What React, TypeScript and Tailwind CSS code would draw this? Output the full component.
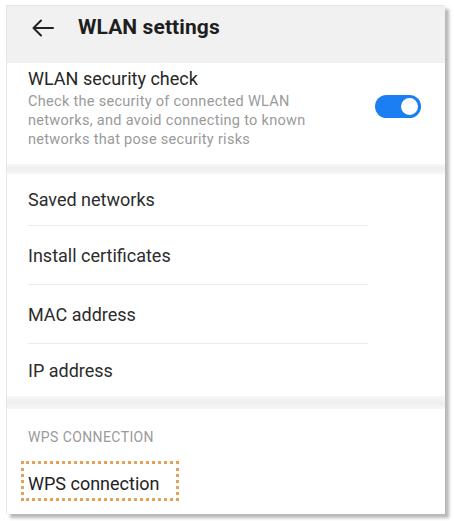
import React from 'react';

const rows = [
  { label: 'Saved networks', h: 'h-[51px]' },
  { label: 'Install certificates', h: 'h-[58px]' },
  { label: 'MAC address', h: 'h-[58px]' },
  { label: 'IP address', h: 'h-[52px]' },
];

function BackArrow() {
  return (
    <svg width="22" height="18" viewBox="0 0 22 18" fill="none" stroke="#222" strokeWidth="2" strokeLinecap="round" strokeLinejoin="round">
      <path d="M21 9H2" />
      <path d="M9 1.5L1.5 9L9 16.5" />
    </svg>
  );
}

function Toggle() {
  return (
    <div className="w-[46px] h-[23px] rounded-full bg-[#1b7ef2] flex items-center justify-end pr-px">
      <div className="w-[21px] h-[21px] rounded-full bg-white border-2 border-[#1b7ef2]" />
    </div>
  );
}

export default function App() {
  return (
    <div className="w-[454px] h-[521px] bg-white pt-[5px] pl-[6px]" style={{ fontFamily: 'Roboto, "Liberation Sans", sans-serif' }}>
      <div className="w-[439px] h-[509px] bg-white border-l border-t border-[#e6e6e6] shadow-[4px_4px_3px_rgba(0,0,0,0.28)] flex flex-col overflow-hidden">
        {/* header */}
        <div className="h-[57px] bg-[#f1f1f1] pl-[25px] shrink-0">
          <div className="h-[44px] flex items-center">
            <BackArrow />
            <span className="ml-[24px] text-[21px] font-bold text-[#1e1e1e] tracking-[0.1px]">WLAN settings</span>
          </div>
        </div>

        {/* security check */}
        <div className="h-[101px] flex items-start pl-[21px] pr-[24px] pt-[4px] shrink-0">
          <div className="flex-1">
            <div className="text-[18px] leading-[24px] text-[#262626]">WLAN security check</div>
            <div className="text-[14.5px] leading-[19px] tracking-[0.3px] text-[#9a9a9a] w-[300px] mt-[1px]">
              Check the security of connected WLAN networks, and avoid connecting to known networks that pose security risks
            </div>
          </div>
          <div className="mt-[28px]">
            <Toggle />
          </div>
        </div>

        <div className="h-[10px] bg-gradient-to-b from-[#f7f7f7] via-[#efefef] to-[#f7f7f7] shrink-0" />

        {/* list */}
        <div className="pl-[21px] shrink-0">
          {rows.map((r, i) => (
            <div key={r.label}>
              <div className={`${r.h} flex items-center text-[18px] text-[#2c2c2c]`}>{r.label}</div>
              {i < rows.length - 1 && <div className="h-px w-[340px] bg-[#ebebeb]" />}
            </div>
          ))}
        </div>

        <div className="h-[13px] bg-gradient-to-b from-[#f7f7f7] via-[#efefef] to-[#f7f7f7] shrink-0" />

        {/* WPS */}
        <div className="pl-[21px] pt-[19px]">
          <div className="text-[14px] leading-[18px] tracking-[0.4px] text-[#9a9a9a]">WPS CONNECTION</div>
          <div className="mt-[15px] -ml-[7px] w-[158px] h-[40px] border-[3px] border-dotted border-[#e2a258] flex items-center pl-[4px] pt-[4px] text-[18px] text-[#222]">
            WPS connection
          </div>
        </div>
      </div>
    </div>
  );
}
